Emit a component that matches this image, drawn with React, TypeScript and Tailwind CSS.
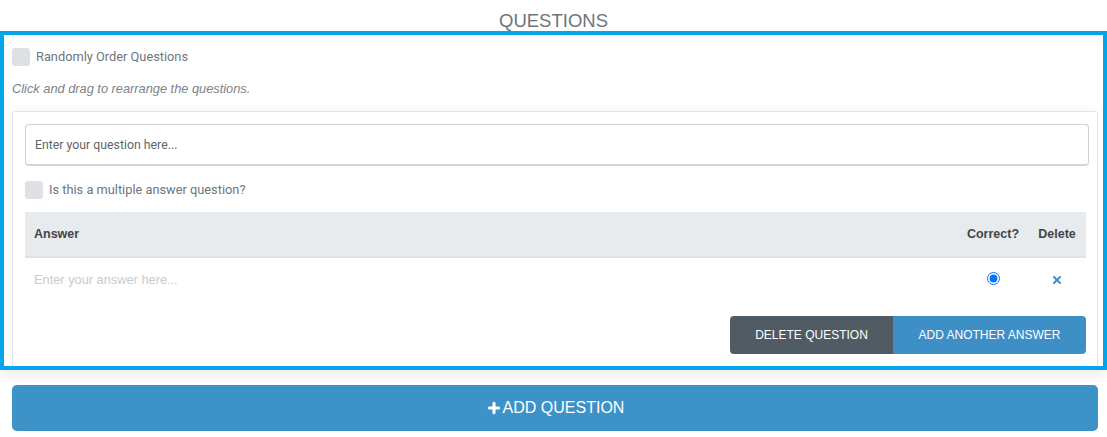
import { Plus, X } from 'lucide-react';

function Checkbox({ label, className = '' }: { label: string; className?: string }) {
  return (
    <label className={`flex items-center gap-[6px] ${className}`}>
      <span className="w-[18px] h-[18px] rounded-[3px] bg-[#dde1e6] shrink-0" />
      <span className="text-[12.8px] text-[#6f767d] leading-[18px]">{label}</span>
    </label>
  );
}

export default function App() {
  return (
    <div className="w-[1107px] h-[437px] bg-white font-['Roboto',sans-serif]">
      <h2 className="h-[31px] pt-[11px] text-center text-[18.5px] leading-[20px] text-[#6c757d] font-['Liberation_Sans',Arial,sans-serif]">
        QUESTIONS
      </h2>

      <div className="h-[339px] border-4 border-[#03a6e8] overflow-hidden pl-2 pr-[5px] pt-[13px] shadow-[0_6px_12px_rgba(0,0,0,0.07)]">
        <Checkbox label="Randomly Order Questions" />

        <p className="mt-[14px] text-[12.8px] leading-[18px] italic text-[#7c8288] font-['Liberation_Sans',Arial,sans-serif]">
          Click and drag to rearrange the questions.
        </p>

        <div className="mt-[13px] border border-[#e1e3e5] rounded-[3px] pl-3 pr-2 pt-3 pb-6 shadow-[0_-3px_8px_rgba(0,0,0,0.03)]">
          <input
            className="w-full h-[42px] px-[9px] rounded-[4px] border border-[#d0d3d6] border-b-2 border-b-[#d3d5d8] text-[12.3px] text-[#555] placeholder:text-[#5e646a] outline-none"
            placeholder="Enter your question here..."
          />

          <Checkbox label="Is this a multiple answer question?" className="mt-[15px]" />

          <div className="mr-[3px]">
            <div className="mt-[13px] flex items-center h-[46px] bg-[#e8ebee] border-b-2 border-[#dfe2e5] text-[12.5px] font-bold text-[#40464c] font-['Liberation_Sans',Arial,sans-serif]">
              <div className="flex-1 pl-[9px]">Answer</div>
              <div className="w-[70px] text-center">Correct?</div>
              <div className="w-[58px] text-center">Delete</div>
            </div>

            <div className="flex items-center h-[44px]">
              <input
                className="flex-1 pl-[9px] text-[12.8px] placeholder:text-[#c8cbce] outline-none font-['Liberation_Sans',Arial,sans-serif]"
                placeholder="Enter your answer here..."
              />
              <div className="w-[70px] flex justify-center">
                <input type="radio" defaultChecked className="w-[13px] h-[13px] m-0 accent-[#0075ff] -mt-[4px]" />
              </div>
              <div className="w-[58px] flex justify-center">
                <X size={12} strokeWidth={4} className="text-[#3d8fc7]" />
              </div>
            </div>

            <div className="mt-[14px] flex justify-end font-['Liberation_Sans',Arial,sans-serif]">
              <button className="h-[38px] w-[163px] bg-[#515b63] text-white text-[12px] rounded-l-[4px]">
                DELETE QUESTION
              </button>
              <button className="h-[38px] w-[193px] bg-[#3d8fc6] text-white text-[12px] rounded-r-[4px]">
                ADD ANOTHER ANSWER
              </button>
            </div>
          </div>
        </div>
      </div>

      <button className="mx-3 mt-[15px] w-[1086px] h-[46px] rounded-[5px] bg-[#3d92c7] text-white text-[16px] flex items-center justify-center font-['Liberation_Sans',Arial,sans-serif]">
        <Plus size={16} strokeWidth={4.5} className="mr-[1px]" />
        ADD QUESTION
      </button>
    </div>
  );
}
